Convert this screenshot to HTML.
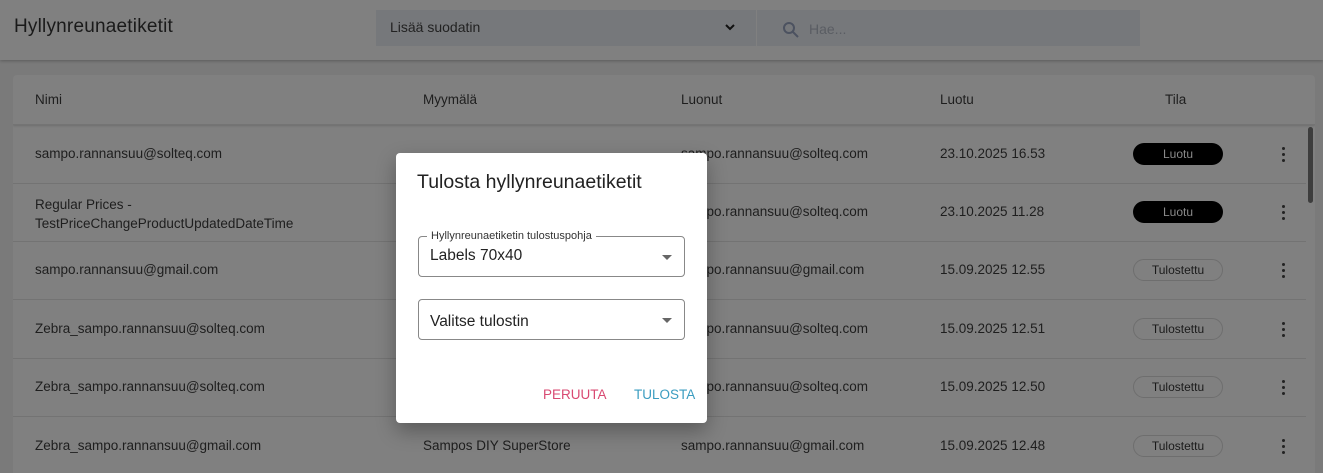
<!DOCTYPE html>
<html style="width:1323px;height:473px;overflow:hidden"><head><meta charset="utf-8"><style>
*{box-sizing:border-box;margin:0;padding:0}
body{width:1323px;height:473px;overflow:hidden;background:#7a7a7a;font-family:"Liberation Sans",sans-serif;position:relative;color:#1e1e1e}
.hdr{position:absolute;left:0;top:0;width:1323px;height:60px;background:#808080;box-shadow:0 1px 3px rgba(0,0,0,.25)}
.title{position:absolute;left:14px;top:16px;font-size:19px;color:#1a1a1a;letter-spacing:.2px}
.filt{position:absolute;left:376px;top:10px;width:380px;height:36px;background:#76787b}
.filt span{position:absolute;left:14px;top:9px;font-size:14px;color:#222}
.srch{position:absolute;left:757px;top:10px;width:383px;height:36px;background:#76787b}
.srch span{position:absolute;left:52px;top:11px;font-size:14px;color:#5a5d63}
.card{position:absolute;left:13px;top:75px;width:1302px;height:398px;background:#808080;border-radius:4px 4px 0 0;overflow:hidden}
.th{position:absolute;top:0;left:0;width:1302px;height:50px;border-bottom:1px solid #747474;box-shadow:0 1px 2px rgba(0,0,0,.15)}
.c{position:absolute;font-size:13.5px;white-space:nowrap}
.row{position:absolute;left:0;width:1293px;border-bottom:1px solid #737373}
.chip{position:absolute;left:1120px;width:90px;height:22px;border-radius:11px;font-size:12px;text-align:center;line-height:22px}
.blk{background:#000;color:#8a8a8a}
.out{border:1px solid #6e6e6e;color:#1a1a1a;line-height:20px}
.keb{position:absolute;left:1269px;width:4px}
.keb i{display:block;width:3px;height:3px;border-radius:50%;background:#222;margin-bottom:3px}
.sb{position:absolute;left:1308px;top:127px;width:5px;height:76px;background:#3d3d3d;border-radius:3px}
.dlg{position:absolute;left:396px;top:153px;width:311px;height:270px;background:#fff;border-radius:4px;box-shadow:0 8px 20px rgba(0,0,0,.3)}
.dt{position:absolute;left:21px;top:18px;font-size:19.5px;color:#222}
.fld{position:absolute;left:22px;width:267px;height:41px;border:1px solid #888;border-radius:4px}
.fld .v{position:absolute;left:11px;top:10px;font-size:15.5px;color:#222}
.fld .a{position:absolute;right:12px;top:18px;width:0;height:0;border-left:5px solid transparent;border-right:5px solid transparent;border-top:5px solid #666}
.lbl{position:absolute;left:8px;top:-7px;background:#fff;padding:0 4px;font-size:11px;color:#333}
.btn{position:absolute;top:234px;font-size:13.5px}
</style></head><body>
<div class="hdr"><div class="title">Hyllynreunaetiketit</div>
<div class="filt"><span>Lisää suodatin</span><svg style="position:absolute;left:348px;top:13px" width="12" height="9" viewBox="0 0 12 9"><path d="M2 2l4 4 4-4" stroke="#111" stroke-width="2" fill="none"/></svg></div>
<div class="srch"><svg style="position:absolute;left:25px;top:11px" width="18" height="18" viewBox="0 0 18 18"><circle cx="7" cy="7" r="5" stroke="#4c5260" stroke-width="2" fill="none"/><path d="M11 11l5 5" stroke="#4c5260" stroke-width="2"/></svg><span>Hae...</span></div></div>
<div class="card">
<div class="th"><div class="c" style="left:22px;top:17px">Nimi</div><div class="c" style="left:410px;top:17px">Myymälä</div><div class="c" style="left:668px;top:17px">Luonut</div><div class="c" style="left:927px;top:17px">Luotu</div><div class="c" style="left:1152px;top:17px">Tila</div></div>

<div class="row" style="top:51px;height:58px"><div class="c" style="left:22px;top:20px">sampo.rannansuu@solteq.com</div><div class="c" style="left:668px;top:20px">sampo.rannansuu@solteq.com</div><div class="c" style="left:927px;top:20px">23.10.2025 16.53</div><div class="chip blk" style="top:17px">Luotu</div><div class="keb" style="top:21px"><i></i><i></i><i></i></div></div>
<div class="row" style="top:109px;height:58px"><div class="c" style="left:22px;top:11px;line-height:19px">Regular Prices -<br>TestPriceChangeProductUpdatedDateTime</div><div class="c" style="left:668px;top:20px">sampo.rannansuu@solteq.com</div><div class="c" style="left:927px;top:20px">23.10.2025 11.28</div><div class="chip blk" style="top:17px">Luotu</div><div class="keb" style="top:21px"><i></i><i></i><i></i></div></div>
<div class="row" style="top:167px;height:58px"><div class="c" style="left:22px;top:20px">sampo.rannansuu@gmail.com</div><div class="c" style="left:668px;top:20px">sampo.rannansuu@gmail.com</div><div class="c" style="left:927px;top:20px">15.09.2025 12.55</div><div class="chip out" style="top:17px">Tulostettu</div><div class="keb" style="top:21px"><i></i><i></i><i></i></div></div>
<div class="row" style="top:225px;height:59px"><div class="c" style="left:22px;top:21px">Zebra_sampo.rannansuu@solteq.com</div><div class="c" style="left:668px;top:21px">sampo.rannansuu@solteq.com</div><div class="c" style="left:927px;top:21px">15.09.2025 12.51</div><div class="chip out" style="top:18px">Tulostettu</div><div class="keb" style="top:22px"><i></i><i></i><i></i></div></div>
<div class="row" style="top:284px;height:58px"><div class="c" style="left:22px;top:20px">Zebra_sampo.rannansuu@solteq.com</div><div class="c" style="left:668px;top:20px">sampo.rannansuu@solteq.com</div><div class="c" style="left:927px;top:20px">15.09.2025 12.50</div><div class="chip out" style="top:17px">Tulostettu</div><div class="keb" style="top:21px"><i></i><i></i><i></i></div></div>
<div class="row" style="top:342px;height:60px;border:none"><div class="c" style="left:22px;top:21px">Zebra_sampo.rannansuu@gmail.com</div><div class="c" style="left:410px;top:21px">Sampos DIY SuperStore</div><div class="c" style="left:668px;top:21px">sampo.rannansuu@gmail.com</div><div class="c" style="left:927px;top:21px">15.09.2025 12.48</div><div class="chip out" style="top:18px">Tulostettu</div><div class="keb" style="top:22px"><i></i><i></i><i></i></div></div>
</div>
<div class="sb"></div>
<div class="dlg"><div class="dt">Tulosta hyllynreunaetiketit</div>
<div class="fld" style="top:83px"><div class="lbl">Hyllynreunaetiketin tulostuspohja</div><div class="v">Labels 70x40</div><div class="a"></div></div>
<div class="fld" style="top:146px"><div class="v" style="top:13px">Valitse tulostin</div><div class="a" style="top:18px"></div></div>
<div class="btn" style="left:147px;color:#d94a72">PERUUTA</div><div class="btn" style="left:238px;color:#3a9cc0">TULOSTA</div>
</div>
</body></html>
